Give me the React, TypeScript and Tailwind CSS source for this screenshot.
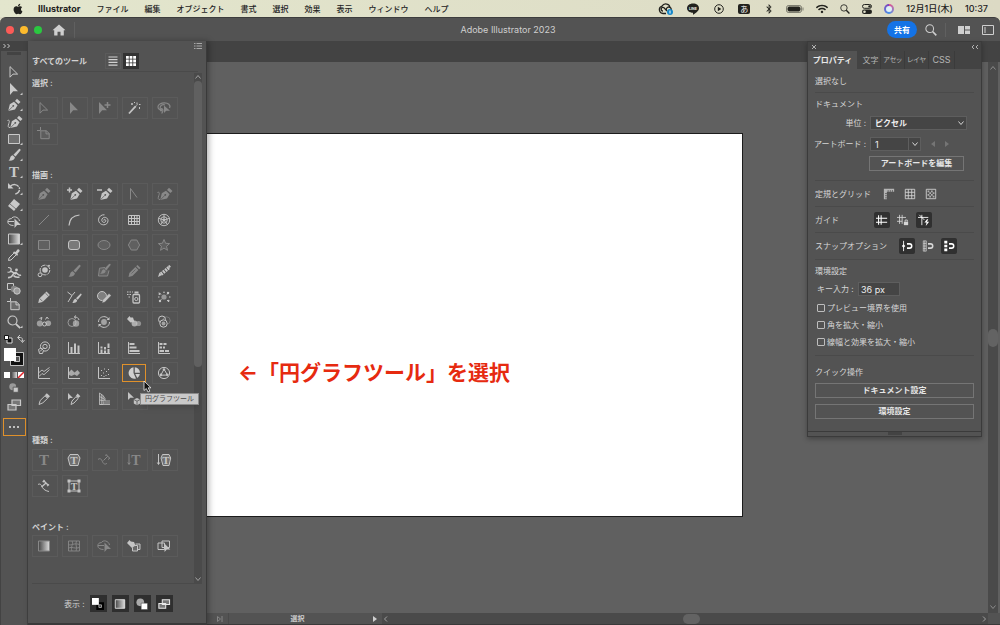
import React, { type ReactNode } from "react";
import clsx from "clsx";
import { FaApple, FaBluetoothB, FaWifi } from "react-icons/fa";

const line = { fill: "none", stroke: "currentColor" };
const BG = "#535353";

const nib = (
  <>
    <path d="M1.2 13 2.8 6.2 7 3.8l3.6 3.4L8 11.4z" />
    <path d="m8 2.9 2-2.1 3.5 3.3-2 2z" />
    <path d="M1.2 13 6 8.2" fill="none" stroke={BG} strokeWidth=".7" />
    <circle cx="6.3" cy="7.8" r=".9" fill={BG} />
  </>
);

const brush = (
  <>
    <path d="M13 .9c.9.5.7 1.3.2 1.9L8.6 8.5 6.4 6.7l5.1-5.2c.5-.5 1-.9 1.5-.6z" />
    <path d="M5.8 7.3 7.9 9.2c-.2 2.6-2.7 4-6.9 3.4 1.8-.7 1.6-1.3 2.1-2.7.5-1.4 1.6-2.5 2.7-2.6z" />
  </>
);

const serifT = (x: number, y: number, size: number) => (
  <text x={x} y={y} fontSize={size} textAnchor="middle" fontFamily="Liberation Serif" fontWeight="bold">
    T
  </text>
);

const axes = <path d="M1.5 1v11.5H13" {...line} />;
const magnet = <path d="M7 4.5h3a2.5 2.5 0 0 1 0 5H7" {...line} strokeWidth="1.8" />;

const icons: Record<string, ReactNode> = {
  selection: <path d="M3 1.6v10.6l3-3.1h4.6z" {...line} />,
  direct: <path d="M3 1v12l3.2-3.7H11z" />,
  group: (
    <>
      <path d="M2 1v12l3.2-3.7H10z" />
      <path d="M10.5 1v6M7.5 4h6" {...line} strokeWidth="1.5" />
    </>
  ),
  wand: (
    <>
      <path d="M2 12.5 8.8 5.2" {...line} strokeWidth="1.8" />
      <path d="M10 1.5v2M12.5 6v2M5 2v2M4 3h2M9.5 4.6l1-1M12 3.5h1.5M7 1.5h1" {...line} />
    </>
  ),
  lasso: (
    <>
      <path d="M12.6 7C14 4 11 1.8 7.5 1.8S1 3.4 1 5.8c0 2 1.8 3.2 4 3.2M3 7.5C3 4 6 3 8 4M5 9.5c-1.5 1-2.5-.5-1.3-1.5s2.8.5 2 2.5l-1 2" {...line} strokeWidth="1.2" />
      <path d="M7 4.500V12l2.200-2.300H13z" />
    </>
  ),
  artboard: (
    <>
      <path d="M3.5 0v3.5M0 3.5h3.5" {...line} />
      <path d="M3.8 3.8h5.7l2.7 2.7v5.2H3.8z" fill="currentColor" fillOpacity=".2" stroke="currentColor" />
      <path d="M9 3.5v3.4h3.4" {...line} />
    </>
  ),
  pen: nib,
  addPen: (
    <>
      <g transform="translate(2 0)">{nib}</g>
      <path d="M2.5.5v5M0 3h5" {...line} strokeWidth="1.5" />
    </>
  ),
  deletePen: (
    <>
      <g transform="translate(2 0)">{nib}</g>
      <path d="M0 3h5" {...line} strokeWidth="1.5" />
    </>
  ),
  anchor: <path d="M3.5 12.5v-11l6.5 9" {...line} />,
  curvature: (
    <>
      <g transform="translate(2 0)">{nib}</g>
      <path d="M.5 5.5c2-1 2.2.8 1.3 3-.9 2.6-1 4.2 1.4 4" {...line} />
    </>
  ),
  lineSeg: <path d="M2 12 12 2" {...line} />,
  arc: <path d="M2 12.5C2.500 6 6 2.5 12.5 2" {...line} strokeWidth="1.2" />,
  spiral: <path d="M7 7.6c-.8-.6.3-1.8 1.3-.9 1.2 1.2 0 3-1.6 2.7C4.5 9 4.2 6.2 5.8 5c2-1.5 5-.3 5.2 2.4.2 2.7-2 4.6-4.5 4.4C3.3 11.6 1.2 9 1.6 6.2 2 3.4 4.5 1.5 7.5 1.8" {...line} />,
  gridTool: <path d="M1.5 2.5h11v9h-11zM4.5 2.5v9M7.5 2.5v9M10 2.5v9M1.5 5.5h11M1.5 8.5h11" {...line} />,
  polar: (
    <g {...line} strokeWidth=".9">
      <circle cx="7" cy="7" r="5.7" />
      <circle cx="7" cy="7" r="3.2" />
      <path d="M7 7V1.3M7 7l5.4-1.7M7 7l3.4 4.6M7 7l-3.4 4.6M7 7 1.6 5.3" />
      <circle cx="7" cy="7" r="1" />
    </g>
  ),
  rect: <path d="M1.5 2.5h11v9h-11z" fill="currentColor" fillOpacity=".25" stroke="currentColor" />,
  roundRect: <rect x="1.5" y="2.5" width="11" height="9" rx="2.5" fill="currentColor" fillOpacity=".35" stroke="currentColor" />,
  ellipse: <ellipse cx="7" cy="7" rx="6" ry="4.5" fill="currentColor" fillOpacity=".25" stroke="currentColor" />,
  polygon: <path d="M4.2 2h5.6L12.6 7l-2.8 5H4.2L1.4 7z" fill="currentColor" fillOpacity=".25" stroke="currentColor" />,
  star: <path d="m7 1.5 1.6 3.8 4 .3-3.1 2.7 1 4L7 10.1l-3.5 2.2 1-4L1.4 5.6l4-.3z" fill="currentColor" fillOpacity=".25" stroke="currentColor" />,
  flare: (
    <>
      <circle cx="8" cy="6" r="2.8" />
      <circle cx="8" cy="6" r="4.9" {...line} strokeDasharray="5 1" />
      <circle cx="3" cy="10.8" r="1.9" fill={BG} stroke="currentColor" />
      <circle cx="12" cy="1.8" r="1" />
    </>
  ),
  brush,
  blob: (
    <>
      <path d="M8 3.5 2.5 4.2 1.5 12h9l1.5-5.5" fill="currentColor" fillOpacity=".25" stroke="currentColor" />
      <g transform="translate(2 -1) scale(.85)">{brush}</g>
    </>
  ),
  pencil: (
    <>
      <path d="m1.5 13 .9-4 6-6 3 3-6 6z" />
      <path d="m9.2 2.2 1.3-1.3 3 3-1.3 1.3z" />
      <path d="m4.5 9.5 4-4" stroke={BG} strokeWidth=".6" />
    </>
  ),
  smooth: (
    <>
      <path d="m1 13 1.5-4.500L5 11z" />
      <path d="m3.600 8.200 2.200 2.800M5.800 6.400 8 9.200M8 4.600l2.200 2.800M10 2.800l2.200 2.800M11.700 1.500l1.500 1.900" {...line} strokeWidth="1.9" />
    </>
  ),
  pathEraser: (
    <>
      <path d="m1.2 13 1-4.2L9.5 1.5l3.4 3.4L5.600 12z" />
      <path d="m2.7 8.5 3 3M8.3 3l3.2 3.2" stroke={BG} strokeWidth=".7" />
    </>
  ),
  join: (
    <>
      <path d="M.5 2 5 5.5 1 12M5 5.5 8 2" {...line} />
      <g transform="translate(4 3) scale(.78)">{brush}</g>
    </>
  ),
  shaper: (
    <>
      <circle cx="5" cy="6" r="4.5" fill="currentColor" fillOpacity=".4" stroke="currentColor" />
      <path d="m5 13 .8-3.2L12 3.5l2.2 2L8 12z" stroke={BG} strokeWidth=".4" />
    </>
  ),
  sprayer: (
    <>
      <rect x="6" y="4.5" width="6.5" height="8.5" rx="1" {...line} strokeWidth="1.3" />
      <path d="M7.5 1.5h4v2h-4z" />
      <circle cx="9.3" cy="9" r="1.6" {...line} />
      <path d="M0 2h1.5M2.5 2H4M5 2h1M0 4.5h1.5M2.5 4.5H4M1.5 7H3" {...line} />
    </>
  ),
  scatter: (
    <>
      <circle cx="7" cy="7" r="2.6" fillOpacity=".6" />
      <path d="m2 2.5 2 2M12 2l-2 2.5M2 11.5l2.5-2M12 12l-2-2M1 7h1.5M12 7h1.5" {...line} />
      <circle cx="2.5" cy="4" r="1" />
      <circle cx="11" cy="3" r="1.2" />
      <circle cx="3" cy="11" r="1.2" />
      <circle cx="11.5" cy="10.8" r="1" />
      <circle cx="7" cy="2.3" r=".8" />
    </>
  ),
  symShift: (
    <>
      <circle cx="2.8" cy="8.5" r="3" fillOpacity=".65" />
      <circle cx="7.5" cy="9" r="2" {...line} />
      <circle cx="11.3" cy="8.3" r="2.8" fillOpacity=".65" />
      <path d="M2.5 3.5 5 2.5l-1 2.8M8.5 4.5 10 2l1.5 2" {...line} />
    </>
  ),
  symScrunch: (
    <>
      <circle cx="5" cy="7.5" r="4" {...line} strokeOpacity=".6" />
      <circle cx="9" cy="8.5" r="3.2" fillOpacity=".65" />
      <path d="M7.5 2c2.5 0 4 1 4.5 3M9 .5 7.3 2 9 3.5" {...line} />
    </>
  ),
  symSpin: (
    <>
      <circle cx="7" cy="7" r="2.9" fillOpacity=".7" />
      <path d="M1.500 7C1.500 3.500 4.500 1.200 8 1.700c1.500.3 2.500 1 3.200 2M12.500 7c0 3.500-3 5.800-6.500 5.300-1.500-.3-2.500-1-3.200-2" {...line} />
      <path d="M12.500 2v3h-3zM1.500 12V9h3z" />
    </>
  ),
  symStain: (
    <>
      <path d="m0 4 2.5-3 1 1.5L6 2.5l1.5 4.5-4 .5z" />
      <circle cx="7.5" cy="8.5" r="2.9" fillOpacity=".8" />
      <circle cx="11.5" cy="8.5" r="2.6" fillOpacity=".55" />
    </>
  ),
  symScreen: (
    <>
      <circle cx="5" cy="4.5" r="3.5" {...line} />
      <circle cx="9.5" cy="5.5" r="3.7" {...line} strokeOpacity=".3" />
      <circle cx="6.5" cy="8.5" r="3.7" fill={BG} stroke="currentColor" />
      <circle cx="6.5" cy="8.5" r="1.9" fillOpacity=".7" />
    </>
  ),
  symStyle: (
    <>
      <circle cx="8" cy="5.5" r="4.6" {...line} />
      <circle cx="8" cy="5.5" r="2.2" {...line} />
      <path d="M1.5 8.5 4 7l2.5 2.5-1 3h-3z" fill={BG} stroke="currentColor" />
      <path d="m3 10.5 4-4" {...line} />
    </>
  ),
  column: <>{axes}<path d="M3.5 6h2v6h-2zM7 2.5h2V12H7zM10.5 4.5h2V12h-2z" /></>,
  stackedColumn: <>{axes}<path d="M3.5 8.5h2V12h-2zM7 9.5h2V12H7zM10.5 8h2v4h-2zM3.5 5.5h2v2h-2zM7 6h2v2.5H7zM10.5 2.5h2V7h-2z" /></>,
  bar: <>{axes}<path d="M2.5 2h5v2h-5zM2.5 5.5h7v2h-7zM2.5 9h10v2h-10z" /></>,
  stackedBar: <>{axes}<path d="M2.5 2h3v2h-3zM6.5 2h3v2h-3zM2.5 5.5H5v2H2.5zM6 5.5h2v2H6zM2.5 9H7v2H2.5zM8 9h4v2H8z" /></>,
  lineGraph: <>{axes}<path d="m2 10.5 3-3 2 1.2 5.5-5M2 6.5 5 4l2 1.5 5.5-4" {...line} strokeWidth=".9" /></>,
  area: <>{axes}<path d="M2 6 4.5 3.5l3 3L10.500 4 13 7l-3 3-2.5-1.5L4.5 10 2 9z" fillOpacity=".75" /></>,
  scatterGraph: <>{axes}<path d="M4 4h1v1H4zM7 2.5h1v1H7zM6 6.5h1v1H6zM9 5h1v1H9zM11 3h1v1h-1zM4 9h1v1H4zM8.5 9h1v1h-1zM11 8h1v1h-1zM6.5 10h1v1h-1z" /></>,
  pie: (
    <>
      <path d="M6.5 1.2A5.8 5.8 0 1 0 9 12.5L6.5 7z" />
      <path d="M7.8 1.2v5.6H13a5.7 5.7 0 0 0-5.2-5.6zM8.3 8l2 4a5.6 5.6 0 0 0 2.6-4z" />
    </>
  ),
  radar: (
    <>
      <circle cx="7" cy="7" r="5.6" {...line} />
      <path d="M7 3.2 10.5 9l-6.7.2z" {...line} />
      <circle cx="7" cy="3.5" r="1.2" />
      <circle cx="10.3" cy="8.7" r="1.3" />
      <circle cx="3.9" cy="8.9" r="1.3" />
    </>
  ),
  knife: (
    <>
      <path d="m2 12.5 1.2-4L8 3.8l2.6 2.5-4.7 4.5z" {...line} />
      <path d="m7.8 3.2 2-2 3.2 3-2 2z" />
    </>
  ),
  sliceSelect: (
    <>
      <path d="m4 12.5 1-3.5 4-4.3 2 2L7 11z" {...line} />
      <path d="m8.8 4 1.8-2.5 2.8 2.8L11.2 6zM1 1v7l2-2h3z" />
    </>
  ),
  perspective: <path d="M2.5 1v11.5M2.5 1 6 3.5v9H2.5M6 3.5l2 3V9h5M4.3 2.2v10.3M2.5 4.5 8 7.5M2.5 8 8 9M6 11h7M2.5 12.5H13" {...line} strokeWidth=".8" />,
  perspectiveSelect: (
    <>
      <path d="M1 0v8l2.3-2.3H7z" />
      <path d="m10 6 3.2 1.5v4L10 13.3l-3.2-1.8v-4z" />
      <path d="m6.8 7.5 3.2 1.7 3.2-1.7M10 9.2v4" {...line} stroke={BG} strokeWidth=".8" />
    </>
  ),
  type: serifT(7, 12, 15),
  areaType: (
    <>
      <path d="M3 1.5h8L13 5l-2 7.5H3L1 5z" fill="currentColor" fillOpacity=".25" stroke="currentColor" />
      {serifT(7, 11, 11)}
    </>
  ),
  pathType: (
    <>
      <path d="M1 6.5c2.5-2 3.5 0 4.5 2.2s2.5 3.3 4.5 1.5" {...line} />
      <path d="M9 1.5 12.5 5M10.8 3.2 6.5 7.5M8.5 3l1.2-1.5M11 6.5 13 5" {...line} />
    </>
  ),
  vType: <>{serifT(9, 12, 14)}<path d="M2 1v10M.8 9.5 2 11.5l1.2-2" {...line} /></>,
  vAreaType: (
    <>
      <path d="M5.5 1.5H12L13.7 5 12 12.5H6L4 5z" fill="currentColor" fillOpacity=".25" stroke="currentColor" />
      {serifT(9, 11, 11)}
      <path d="M1.5 1v10M.3 9.5l1.2 2 1.2-2" {...line} />
    </>
  ),
  vPathType: (
    <>
      <path d="M1 5.5C3.500 4 4.500 6.500 5.5 8.5s3.5 3.5 6.500 4" {...line} />
      <path d="M6.5 1.500 11 6M9 4 4.500 8M5.800 3.200 7.500 1M10 7l2-1.500" {...line} strokeWidth="1.4" />
    </>
  ),
  touchType: (
    <>
      <path d="M2 2h10v10H2z" {...line} />
      <path d="M.5.5h3v3h-3zM10.5.5h3v3h-3zM.5 10.5h3v3h-3zM10.5 10.5h3v3h-3z" />
      {serifT(7, 10.5, 10)}
    </>
  ),
  gradient: (
    <>
      <defs>
        <linearGradient id="fade">
          <stop stopColor="#444" />
          <stop offset="1" stopColor="#ddd" />
        </linearGradient>
      </defs>
      <path d="M1.5 2h11v10h-11z" fill="url(#fade)" stroke="currentColor" />
    </>
  ),
  mesh: <path d="M1.5 2h11v10h-11zM5 2c2 3-2 6 0 10M9.5 2c-2 4 1.5 6-.5 10M1.5 5.5c3 1.5 5-2 11 0M1.5 9c4-2 6 1.5 11-.5" {...line} strokeWidth=".9" />,
  shapeBuilder: (
    <>
      <path d="M6.5 10.5C3 10.5.8 9 .8 6.8S2.5 3.5 4.3 3.7C5 2.3 7 1.5 8.7 2c2 .6 3.5 2 3.8 4M1 6.500h6" {...line} />
      <path d="M7.5 3.5V13l2.600-2.900H14z" />
    </>
  ),
  liveBucket: (
    <>
      <path d="m0 4 2.5-3 1.3 1.5L7 3l1.5 3.5L5 9z" />
      <path d="M5.5 8.5V12h5V6.5H8M8.5 5H13v5.5h-2.5" fill="currentColor" fillOpacity=".2" stroke="currentColor" />
    </>
  ),
  liveSelect: (
    <>
      <path d="M1 4h6.5v6.5H1zM5 2h7.5v6.5H5z" {...line} />
      <path d="M7.5 4.5V13l2.3-2.5h3.5z" />
    </>
  ),
  rotate: (
    <>
      <path d="M3.5 4c3.5-2.8 8.5-1.3 9 2.8.2 2.5-1.5 4.7-4.2 5.2" {...line} strokeWidth="1.4" strokeDasharray="9 1 1.5 1" />
      <path d="M1 1v5.5h5.5z" />
    </>
  ),
  eraser: (
    <>
      <path d="m7 1 6 5-6 7-6-5z" />
      <path d="m3 6 6 5" stroke={BG} strokeWidth=".7" />
    </>
  ),
  eyedropper: (
    <>
      <path d="M1.5 12.5 2 10l5.5-5.5 2 2L4 12z" {...line} />
      <path d="M7 3.5 8.5 4l2-2.5c1-1 2.8.8 1.9 1.9l-1.9 2.1.5 1.5-1 .8L6 4.5z" />
    </>
  ),
  warp: (
    <>
      <path d="M1 2.500c3 0 3.500 1.500 3 3S2 7.500.500 7" {...line} strokeWidth="1.2" />
      <path d="M1 12.500c3 .5 4-1 5-3s2.500-2.500 4-1 2 2.500 4 1.500M4 6.500c2 0 3 2.500 5 2.500M6.500 10.500c1.500 2 4 2 6 1.500" {...line} strokeWidth="1.6" />
      <circle cx="9.500" cy="5" r="1.4" />
    </>
  ),
  blend: (
    <>
      <path d="M.5 1.5h6v6h-6z" {...line} />
      <circle cx="7" cy="7" r="3.2" fill="#888" />
      <circle cx="10" cy="9" r="3.2" fill="#9a9a9a" stroke="currentColor" />
    </>
  ),
  zoom: (
    <>
      <circle cx="5.5" cy="5.5" r="4.5" {...line} strokeWidth="1.2" />
      <path d="m8.8 8.8 4.4 4.4" {...line} strokeWidth="1.9" />
    </>
  ),
  screens: <path d="M5 2h8.5v5.5H5zM1 6.5h8V12H1z" fill="#777" stroke="currentColor" strokeWidth="1.2" />,
  drawMode: (
    <>
      <circle cx="5.5" cy="5.5" r="4" fillOpacity=".6" />
      <path d="M6 6h6v6H6z" stroke={BG} />
    </>
  ),
  ruler: (
    <>
      <path d="M1 1h12v3.5H4.5V13H1z" fillOpacity=".75" />
      <path d="M6 2.5v2M8.5 2.5v2M11 2.5v2M2.5 6.5h2M2.5 9h2M2.5 11.5h2" stroke={BG} />
    </>
  ),
  gridBig: <path d="M1.5 1.5h11v11h-11zM5 1.5v11M9 1.5v11M1.5 5h11M1.5 9h11" {...line} />,
  checker: (
    <>
      <path d="M1.5 1.5h11v11h-11z" {...line} />
      <path d="M3 3h2v2H3zM7 3h2v2H7zM5 5h2v2H5zM9 5h2v2H9zM3 7h2v2H3zM7 7h2v2H7zM5 9h2v2H5zM9 9h2v2H9z" fillOpacity=".7" />
    </>
  ),
  guides: <path d="M3 1.5v11M6 1.5v11M0 5h13M0 9.5h13" {...line} strokeWidth="1.2" />,
  guidesLock: (
    <>
      <path d="M3 1v10.5M6 1v10.5M0 4h10.5M0 8.5h6" {...line} />
      <path d="M8 9h5v4H8z" />
      <path d="M9.5 9V7H12v2" {...line} />
    </>
  ),
  smart: (
    <>
      <path d="M4.5 1v12M0 4h12M1.5 1l6 6" {...line} />
      <path d="m10.5 6-3 4H10l-1 4 4-5h-2.5L12 6z" />
    </>
  ),
  snapPoint: <><path d="M3 1v12" {...line} /><path d="m1 7 2-2 2 2-2 2z" />{magnet}</>,
  snapGrid: <><path d="M1.5 1H5v12H1.5zM3.2 1v12M1.5 4H5M1.5 7H5M1.5 10H5" {...line} strokeWidth=".8" />{magnet}</>,
  snapPixel: <><path d="M1.5 1H5v3H1.5zM1.5 5.5H5v3H1.5zM1.5 10H5v3H1.5z" />{magnet}</>,
  fillStroke: (
    <>
      <path d="M6.5 6.5h6v6h-6z" fill="none" stroke="#000" strokeWidth="3" />
      <path d="M8 8h3v3H8z" fill="none" stroke="#ddd" strokeWidth=".8" />
      <path d="M0 0h8v8H0z" fill="#fff" />
    </>
  ),
  circleSquare: (
    <>
      <circle cx="5" cy="5" r="4.5" fill="#aaa" />
      <path d="M6 6h7.5v7.5H6z" fill="#fff" stroke="#333" strokeWidth=".6" />
    </>
  ),
};

type IconProps = { name: string; flyout?: boolean; size?: string };

function Icon({ name, flyout, size = "size-3.5" }: IconProps) {
  return (
    <svg viewBox="0 0 14 14" fill="currentColor" className={clsx("block shrink-0 overflow-visible", size)} aria-hidden="true">
      {icons[name]}
      {flyout && <path d="M15.5 10.5V13H13z" />}
    </svg>
  );
}

function Chevron({ d, className }: { d: string; className?: string }) {
  return (
    <svg viewBox="0 0 8 8" className={clsx("size-2 shrink-0", className)} fill="none" stroke="currentColor" aria-hidden="true">
      <path d={d} />
    </svg>
  );
}

const UP = "m1.5 5.5 2.5-3 2.5 3";
const DOWN = "m1.5 2.5 2.5 3 2.5-3";
const LEFT = "M5 1.5 2.5 4 5 6.5";
const RIGHT = "M3 1.5 5.5 4 3 6.5";

const menus = ["ファイル", "編集", "オブジェクト", "書式", "選択", "効果", "表示", "ウィンドウ", "ヘルプ"];

function MenuBar() {
  return (
    <header className="flex h-[17px] items-center justify-between bg-linear-to-r from-[#e3e6cd] to-[#dcdac4] px-3 text-[#22221e]">
      <nav className="flex items-center gap-4 font-medium">
        <FaApple className="size-3" />
        <span className="-ml-0.5 text-[9px] font-bold">Illustrator</span>
        {menus.map((m) => (
          <a key={m} href="#">{m}</a>
        ))}
      </nav>
      <div className="flex items-center gap-3">
        <svg viewBox="0 0 16 12" className="h-3 w-4" fill="none" stroke="currentColor" strokeWidth="1.3">
          <path d="M5 10.5a3.8 3.8 0 0 1-1-7.4C6-.5 12 .5 12 5M5 10.5h3M5 8a1.8 1.8 0 1 1 1-3.3L9 8M8.5 7.5A2.5 2.5 0 1 1 11 9" />
          <circle cx="12" cy="9" r="3" fill="#1687c9" stroke="none" />
          <path d="M12 7.5v3" stroke="#fff" strokeWidth="1" />
        </svg>
        <svg viewBox="0 0 14 12" className="h-3 w-3.5" fill="currentColor">
          <path d="M7 .5c3.6 0 6 2 6 4.7S9.5 10 7 11.8V9.7C3.500 9.6 1 7.7 1 5.2S3.4.5 7 .5z" />
          <text x="7" y="6.5" fontSize="3.5" textAnchor="middle" fill="#eee" fontWeight="bold">LINE</text>
        </svg>
        <svg viewBox="0 0 10 10" className="ml-0.5 size-2.5">
          <circle cx="5" cy="5" r="4.3" fill="none" stroke="currentColor" />
          <path d="M3.8 2.8v4.4L7.3 5z" fill="currentColor" />
        </svg>
        <span className="ml-0.5 grid h-2.5 w-3 place-items-center rounded-[2px] bg-[#22221e] text-[8px] leading-none text-[#eee]">あ</span>
        <FaBluetoothB className="ml-0.5 size-2.5" />
        <svg viewBox="0 0 18 8" className="h-2 w-[18px]">
          <rect x=".5" y=".5" width="15" height="7" rx="2" fill="none" stroke="currentColor" strokeOpacity=".5" />
          <rect x="2" y="2" width="12" height="4" rx="1" fill="currentColor" stroke="currentColor" />
          <path d="M17 2.5v3" stroke="currentColor" strokeOpacity=".5" />
        </svg>
        <FaWifi className="size-3" />
        <Icon name="zoom" size="size-2.5" />
        <svg viewBox="0 0 10 10" className="size-2.5">
          <rect x=".5" y=".5" width="9" height="3.8" rx="1.9" fill="none" stroke="currentColor" />
          <rect y="5.5" width="10" height="4.5" rx="2.2" fill="currentColor" />
          <circle cx="7.5" cy="2.4" r="1.2" fill="currentColor" />
          <circle cx="2.5" cy="7.7" r="1.3" fill="#e0dfca" />
        </svg>
        <span className="grid size-2.5 place-items-center rounded-full bg-conic from-[#e24a8d] via-[#3f8fe8] to-[#7c3fb8]">
          <span className="size-1.5 rounded-full bg-[#dff0f6]" />
        </span>
        <time className="flex gap-3 text-[9px] font-medium whitespace-nowrap">
          <span>12月1日(木)</span>
          <span>10:37</span>
        </time>
      </div>
    </header>
  );
}

function TitleBar() {
  return (
    <div className="bg-[#dcdac4]">
      <div className="grid h-6 grid-cols-[1fr_auto_1fr] items-center rounded-t-md border-t border-[#3d3d3d] bg-[#535353] text-[#cfcfcf]">
        <div className="flex items-center gap-1.5 pl-1.5">
          <button aria-label="閉じる" className="size-2 rounded-full bg-[#fc5b57]" />
          <button aria-label="しまう" className="size-2 rounded-full bg-[#fdbb2d]" />
          <button aria-label="拡大" className="size-2 rounded-full bg-[#2ac840]" />
          <button aria-label="ホーム" className="ml-1 flex h-4 items-center border-r border-[#606060] pr-2">
            <svg viewBox="0 0 14 12" className="h-3 w-3.5" fill="currentColor">
              <path d="m7 .5 6.5 5.800h-1.700v5.200H8.500V7.800h-3v3.700H2.200V6.300H.5z" />
            </svg>
          </button>
        </div>
        <h1 className="pl-4 text-[9px]">Adobe Illustrator 2023</h1>
        <div className="flex items-center justify-end gap-2 pr-1.5">
          <button className="h-[17px] rounded-full bg-[#1473e6] px-[7px] font-bold text-white">共有</button>
          <button aria-label="検索" className="flex h-3.5 items-center border-r border-[#606060] pr-2">
            <Icon name="zoom" size="size-3" />
          </button>
          <button aria-label="ドキュメントの整理" className="ml-1">
            <svg viewBox="0 0 12 8" className="h-2 w-3" fill="currentColor"><path d="M0 0h6v8H0zM7 0h5v3.5H7zM7 4.5h5V8H7z" /></svg>
          </button>
          <button aria-label="ワークスペース" className="ml-1">
            <svg viewBox="0 0 12 10" className="h-2.5 w-3" fill="none" stroke="currentColor"><path d="M.5.5h11v9H.5zM3 2v6" /></svg>
          </button>
        </div>
      </div>
    </div>
  );
}

const toolbar = [
  ["selection"], ["direct", "f"], ["pen", "f"], ["curvature"], ["rect", "f"], ["brush", "f"], ["type", "f"], ["rotate", "f"],
  ["eraser", "f"], ["shapeBuilder"], ["gradient", "f"], ["eyedropper"], ["warp"], ["blend"], ["artboard"], ["zoom", "f"],
];

function Toolbar() {
  return (
    <aside className="flex w-7 shrink-0 flex-col border-x border-[#434343] bg-[#535353] text-[#c9c9c9]">
      <div className="flex h-2.5 items-center bg-[#434343] pl-0.5">
        <Chevron d="m.5 2 2 2-2 2m4-4 2 2-2 2" />
      </div>
      <div className="mx-auto mt-px h-[3px] w-3.5 bg-[#434343]" />
      <div className="mt-[10px] flex h-[264px] flex-col items-center justify-between">
        {toolbar.map(([name, f]) => (
          <button key={name} aria-label={name}>
            <Icon name={name} flyout={!!f} />
          </button>
        ))}
      </div>
      <div className="mt-[5px] flex flex-col items-center">
        <button aria-label="塗りと線">
          <svg viewBox="0 0 22 34" className="block h-[34px] w-[22px]" fill="none">
            <path d="M4 4h5v5H4z" fill="#111" stroke="#ddd" />
            <path d="M1.5 1.5h4v4h-4z" fill="#fff" stroke="#111" />
            <path d="M15 3.5h2.5c1.5 0 2 1 2 4M17 1l-2.5 2.5L17 6M17.5 6l2 2.5 2-2.5" stroke="#c9c9c9" />
            <path d="M9.5 20.5h9v9h-9z" stroke="#111" strokeWidth="3" />
            <path d="M7.5 18.5h13v13h-13zM11.5 22.5h5v5h-5z" stroke="#ddd" strokeWidth=".8" />
            <path d="M1 14h12v13H1z" fill="#fff" />
          </svg>
        </button>
        <button aria-label="カラー" className="mt-1">
          <svg viewBox="0 0 20 6" className="block h-1.5 w-5">
            <path d="M0 0h6v6H0z" fill="#fff" />
            <path d="M7 0h6v6H7z" fill="url(#fade)" />
            <path d="M14 0h6v6h-6z" fill="#fff" />
            <path d="m14 6 6-6" stroke="#e3242b" strokeWidth="1.5" />
          </svg>
        </button>
        <button aria-label="描画方法" className="mt-1"><Icon name="drawMode" size="size-3" /></button>
        <button aria-label="スクリーンモード" className="mt-1"><Icon name="screens" /></button>
        <button aria-label="すべてのツール" className="mt-1.5 flex h-[18px] w-[23px] items-center justify-center gap-0.5 border border-[#e0912b]">
          <i className="size-0.5 rounded-full bg-[#e5e5e5]" />
          <i className="size-0.5 rounded-full bg-[#e5e5e5]" />
          <i className="size-0.5 rounded-full bg-[#e5e5e5]" />
        </button>
      </div>
    </aside>
  );
}

// "!" marks a tool that is not in the toolbar yet and is drawn bright
const groups = [
  { title: "選択 :", top: "mt-0.5", grid: "mt-1.5 h-12", tools: ["selection", "direct", "group", "!wand", "lasso", "artboard"] },
  {
    title: "描画 :",
    top: "mt-[22px]",
    grid: "h-[227px]",
    tools: [
      "pen", "!addPen", "!deletePen", "anchor", "curvature",
      "lineSeg", "!arc", "!spiral", "!gridTool", "!polar",
      "rect", "!roundRect", "ellipse", "polygon", "star",
      "!flare", "brush", "blob", "pencil", "!smooth",
      "!pathEraser", "!join", "!shaper", "!sprayer", "!scatter",
      "!symShift", "!symScrunch", "!symSpin", "!symStain", "!symScreen",
      "!symStyle", "!column", "!stackedColumn", "!bar", "!stackedBar",
      "!lineGraph", "!area", "!scatterGraph", "!pie", "!radar",
      "!knife", "!sliceSelect", "!perspective", "!perspectiveSelect",
    ],
  },
  { title: "種類 :", top: "mt-[22px]", grid: "mt-px h-12", tools: ["type", "!areaType", "pathType", "vType", "!vAreaType", "!vPathType", "!touchType"] },
  { title: "ペイント :", top: "mt-[22px]", grid: "h-[22px]", tools: ["gradient", "mesh", "shapeBuilder", "!liveBucket", "!liveSelect"] },
];

function ToolCell({ id }: { id: string }) {
  const bright = id.startsWith("!");
  const name = id.replace("!", "");
  if (name === "pie") {
    return (
      <div className="relative z-10 flex h-[22px] items-center">
        <button aria-label="円グラフツール" className="flex h-[18px] w-6 items-center justify-center border border-[#e0912b] text-[#cfcfcf]">
          <Icon name="pie" />
        </button>
        <svg viewBox="0 0 9 13" className="absolute top-[18px] left-[21px] h-[13px] w-[9px]">
          <path d="M1 1v9.5l2.3-2L5 12l1.8-.8-1.6-3.4H8z" fill="#111" stroke="#eee" strokeWidth=".8" />
        </svg>
        <span role="tooltip" className="absolute top-[31px] left-[18px] h-3 border border-[#8a8a8a] bg-[#c9c9c9] px-1 text-[7px] leading-[10px] whitespace-nowrap text-[#4a4a4a] shadow-md">
          円グラフツール
        </span>
      </div>
    );
  }
  return (
    <button aria-label={name} className={clsx("flex h-[22px] items-center border border-[#5b5b5b] pl-1", bright ? "text-[#c4c4c4]" : "text-[#888888]")}>
      <Icon name={name} />
    </button>
  );
}

function AllToolsPanel() {
  return (
    <section className="relative z-20 flex w-[179px] shrink-0 flex-col border-r border-b-2 border-[#3a3a3a] bg-[#535353] text-[#d2d2d2] shadow-[2px_0_6px_rgba(0,0,0,0.3)]">
      <div className="flex h-2.5 items-center justify-end pr-1 text-[#a8a8a8]">
        <svg viewBox="0 0 8 6" className="h-1.5 w-2" stroke="currentColor"><path d="M0 .5h1.5M2.5.5H8M0 3h1.5M2.5 3H8M0 5.5h1.5M2.5 5.5H8" /></svg>
      </div>
      <div className="mr-2 ml-1 flex h-[21px] items-center border-b border-[#4a4a4a]">
        <h2 className="w-[73px] font-bold">すべてのツール</h2>
        <button aria-label="リスト表示" className="grid size-4 place-items-center border border-[#5b5b5b]">
          <svg viewBox="0 0 10 10" className="size-2.5" stroke="currentColor" strokeWidth="1.2"><path d="M.5 1h9M.5 3.7h9M.5 6.4h9M.5 9.1h9" /></svg>
        </button>
        <button aria-label="グリッド表示" className="ml-0.5 grid size-4 place-items-center bg-[#333]">
          <svg viewBox="0 0 10 10" className="size-2.5" fill="#fff"><path d="M0 0h2.8v2.8H0zM3.6 0h2.8v2.8H3.6zM7.2 0H10v2.8H7.2zM0 3.6h2.8v2.8H0zM3.6 3.6h2.8v2.8H3.6zM7.2 3.6H10v2.8H7.2zM0 7.2h2.8V10H0zM3.6 7.2h2.8V10H3.6zM7.2 7.2H10V10H7.2z" /></svg>
        </button>
      </div>
      <div className="mx-1 flex flex-1 justify-between pt-px">
        <div>
          {groups.map((g) => (
            <div key={g.title} className={g.top}>
              <h3 className="h-4 leading-4 font-bold">{g.title}</h3>
              <div className={clsx("grid grid-cols-[repeat(5,26px)] content-between gap-x-1", g.grid)}>
                {g.tools.map((t) => (
                  <ToolCell key={t} id={t} />
                ))}
              </div>
            </div>
          ))}
        </div>
        <div className="flex w-2 flex-col items-center justify-between bg-[#4a4a4a] text-[#a0a0a0]">
          <div>
            <Chevron d={UP} />
            <div className="h-[286px] w-2 rounded-full bg-[#606060]" />
          </div>
          <Chevron d={DOWN} />
        </div>
      </div>
      <div className="mx-1 flex h-10 items-center gap-[5px] border-t border-[#4a4a4a] pl-8">
        <span>表示 :</span>
        {["fillStroke", "gradient", "circleSquare", "screens"].map((n) => (
          <button key={n} aria-label={n} className="grid size-[17px] place-items-center bg-[#2f2f2f] text-[#e8e8e8]">
            <Icon name={n} size="size-3" />
          </button>
        ))}
      </div>
    </section>
  );
}

function Toggle({ name, on }: { name: string; on?: boolean }) {
  return (
    <button aria-label={name} aria-pressed={!!on} className={clsx("grid size-4 place-items-center rounded-[2px]", on && "bg-[#303030] text-white")}>
      <Icon name={name} size="size-3" />
    </button>
  );
}

const buttonStyle = "h-[15px] border border-[#757575] font-bold leading-[13px] text-[#e6e6e6]";
const narrowTab = "w-6 border-r border-[#3b3b3b] text-[7px] whitespace-nowrap [font-feature-settings:'palt']";

function PropertiesPanel() {
  return (
    <section className="absolute top-0 right-[18px] z-10 w-[175px] border border-[#3b3b3b] bg-[#535353] text-[#d6d6d6] shadow-[0_2px_5px_rgba(0,0,0,0.3)]">
      <div className="flex h-[9px] items-center justify-between bg-[#434343] px-0.5 text-[#b0b0b0]">
        <Chevron d="m2 2 4 4m0-4L2 6" />
        <Chevron d="M3 2 1 4l2 2m4-4L5 4l2 2" />
      </div>
      <div role="tablist" className="flex h-[18px] bg-[#434343] text-[#b5b5b5]">
        <button role="tab" aria-selected="true" className="w-[49px] bg-[#535353] font-bold text-[#e8e8e8]">プロパティ</button>
        <button role="tab" className="w-6 border-r border-[#3b3b3b] pl-1">文字</button>
        <button role="tab" className={narrowTab}>アセッ</button>
        <button role="tab" className={narrowTab}>レイヤ</button>
        <button role="tab" className="w-[26px] border-r border-[#3b3b3b] text-[9px]">CSS</button>
      </div>
      <div className="px-[7px]">
        <p className="h-6 border-b border-[#4a4a4a] leading-6">選択なし</p>
        <div className="h-[88px] border-b border-[#4a4a4a]">
          <h3 className="h-[22px] leading-[22px]">ドキュメント</h3>
          <div className="flex h-4 items-center">
            <label htmlFor="unit" className="w-[55px] pr-1 text-right">単位 :</label>
            <div className="relative">
              <select id="unit" className="block h-3.5 w-[97px] appearance-none border border-[#5e5e5e] bg-[#454545] px-1 font-bold text-[#efefef]">
                <option>ピクセル</option>
              </select>
              <Chevron d={DOWN} className="absolute top-[3px] right-0.5" />
            </div>
          </div>
          <div className="mt-[5px] flex h-4 items-center">
            <label htmlFor="board" className="-ml-1 w-[59px] pr-1 text-right whitespace-nowrap">アートボード :</label>
            <input id="board" defaultValue="1" className="h-3.5 w-[39px] border border-[#5e5e5e] bg-[#454545] px-1 text-[9px] text-[#efefef]" />
            <button aria-label="アートボード一覧" className="grid h-3.5 w-3 place-items-center border border-l-0 border-[#5e5e5e] bg-[#454545]">
              <Chevron d={DOWN} />
            </button>
            <svg viewBox="0 0 22 6" className="ml-2 h-1.5 w-[22px]" fill="#757575"><path d="M6 0v6L2 3zM16 0v6l4-3z" /></svg>
          </div>
          <button className={clsx("mt-1 ml-[54px] block w-[95px]", buttonStyle)}>アートボードを編集</button>
        </div>
        <div className="flex h-[26px] items-center gap-[5px] border-b border-[#4a4a4a]">
          <span className="w-[61px]">定規とグリッド</span>
          <Toggle name="ruler" />
          <Toggle name="gridBig" />
          <Toggle name="checker" />
        </div>
        <div className="flex h-[26px] items-center gap-[5px] border-b border-[#4a4a4a]">
          <span className="w-[54px]">ガイド</span>
          <Toggle name="guides" on />
          <Toggle name="guidesLock" />
          <Toggle name="smart" on />
        </div>
        <div className="flex h-[27px] items-center gap-[5px] border-b border-[#4a4a4a]">
          <span className="w-[79px]">スナップオプション</span>
          <Toggle name="snapPoint" on />
          <Toggle name="snapGrid" />
          <Toggle name="snapPixel" on />
        </div>
        <div className="h-[96px] border-b border-[#4a4a4a]">
          <h3 className="h-[22px] leading-[22px]">環境設定</h3>
          <div className="flex h-[14px] items-center pl-0.5">
            <label htmlFor="key" className="w-[41px]">キー入力 :</label>
            <input id="key" defaultValue="36 px" className="h-3.5 w-[42px] border border-[#5e5e5e] bg-[#454545] px-0.5 text-[9px] text-[#efefef]" />
          </div>
          <div className="mt-[3px] flex flex-col pl-0.5">
            {["プレビュー境界を使用", "角を拡大・縮小", "線幅と効果を拡大・縮小"].map((t) => (
              <label key={t} className="flex h-[17px] items-center gap-0.5">
                <input type="checkbox" className="size-2 appearance-none rounded-[1px] border border-[#bdbdbd] checked:bg-[#1473e6]" />
                {t}
              </label>
            ))}
          </div>
        </div>
        <h3 className="h-[27px] pt-1 leading-6">クイック操作</h3>
        <button className={clsx("block w-full", buttonStyle)}>ドキュメント設定</button>
        <button className={clsx("mt-1.5 mb-3 block w-full", buttonStyle)}>環境設定</button>
      </div>
      <div className="flex h-[5px] justify-center border-t border-[#3b3b3b]">
        <span className="h-[3px] w-3.5 bg-[#434343]" />
      </div>
    </section>
  );
}

function Workspace() {
  return (
    <main className="relative flex min-w-0 flex-1 flex-col bg-[#606060]">
      <div className="h-[21px] bg-[#434343]" />
      <div className="flex flex-1">
        <div className="min-w-0 flex-1 pt-[71px] pr-[245px]">
          <div className="aspect-[536/384] border-y border-r border-[#1c1c1c] bg-white">
            <p className="pt-[223px] pl-[31px] text-[21px] leading-8 font-bold whitespace-nowrap text-[#e62a10]">←「円グラフツール」を選択</p>
          </div>
        </div>
        <div className="mr-0.5 flex w-2.5 flex-col items-center justify-between bg-[#4a4a4a] text-[#8c8c8c]">
          <Chevron d={UP} className="mt-0.5" />
          <div className="h-[18px] w-2.5 rounded-full bg-[#636363]" />
          <Chevron d={DOWN} className="mb-0.5" />
        </div>
      </div>
      <div className="flex h-3 items-center border-b border-[#3a3a3a] bg-[#535353] text-[#cfcfcf]">
        <svg viewBox="0 0 6 6" className="ml-2.5 size-1.5" fill="none" stroke="#858585"><path d="m.5.5 3 2.5-3 2.5zM5 0v6" /></svg>
        <span className="ml-[5px] w-[138px] border-l border-[#4a4a4a] text-center text-[7px] leading-[11px] font-bold">選択</span>
        <svg viewBox="0 0 6 6" className="ml-1.5 size-1.5" fill="currentColor"><path d="M1 0v6l4-3z" /></svg>
        <div className="mr-3 ml-1 flex h-full flex-1 items-center justify-between bg-[#4a4a4a] text-[#a0a0a0]">
          <Chevron d={LEFT} />
          <div className="ml-3 h-2.5 w-[17px] rounded-full bg-[#636363]" />
          <Chevron d={RIGHT} />
        </div>
      </div>
      <PropertiesPanel />
    </main>
  );
}

export default function App() {
  return (
    <div className="flex min-h-screen flex-col overflow-hidden bg-[#434343] font-['Inter','Noto_Sans_CJK_JP',sans-serif] text-[8px] leading-3" lang="ja">
      <MenuBar />
      <TitleBar />
      <div className="flex flex-1">
        <Toolbar />
        <AllToolsPanel />
        <Workspace />
      </div>
    </div>
  );
}
